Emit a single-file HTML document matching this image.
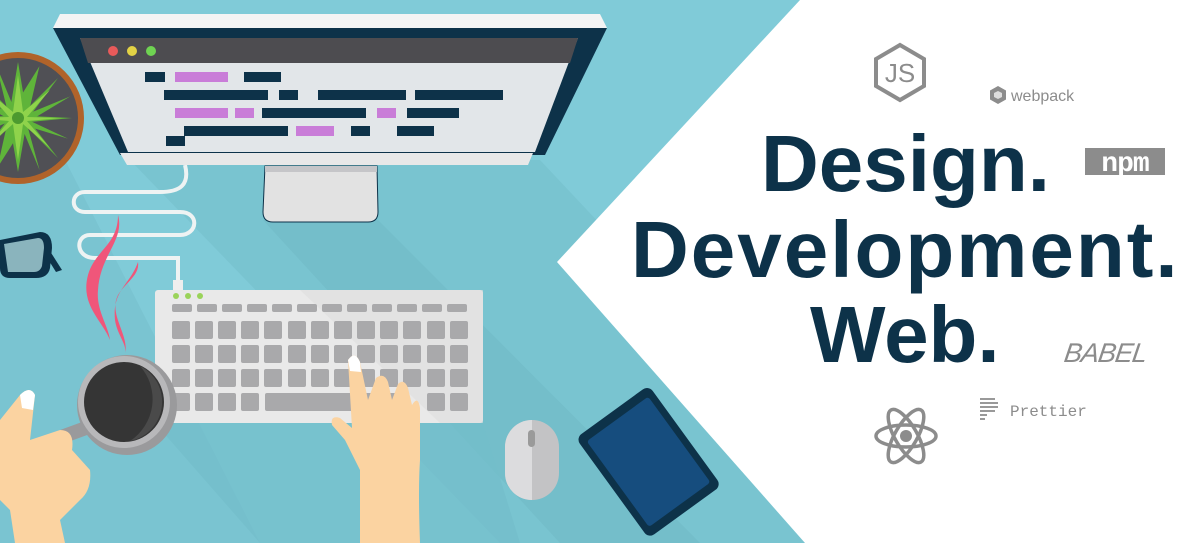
<!DOCTYPE html>
<html><head><meta charset="utf-8"><style>
html,body{margin:0;padding:0;width:1200px;height:543px;overflow:hidden;background:#80cbd8}
.t{position:absolute;font-family:"Liberation Sans",sans-serif;font-weight:bold;color:#0d3249;font-size:80px;line-height:1;white-space:nowrap}
</style></head><body>
<svg width="1200" height="543" style="position:absolute;left:0;top:0" xmlns="http://www.w3.org/2000/svg">
<rect width="1200" height="543" fill="#80cbd8"/>
<polygon points="130,160 540,160 900,543 500,543" fill="#76c0cd" opacity="0.7"/>
<polygon points="263,220 378,220 700,543 560,543" fill="#6fb7c4" opacity="0.5"/>
<polygon points="0,170 60,150 260,543 0,543" fill="#76c0cd" opacity="0.6"/>
<polygon points="155,423 483,423 520,543 260,543" fill="#74bdca" opacity="0.7"/>
<polygon points="800,0 1200,0 1200,543 805,543 557,262" fill="#fff"/>
<!-- plant -->
<circle cx="18" cy="118" r="66" fill="#b0632a"/>
<circle cx="18" cy="118" r="60" fill="#505055"/>
<g fill="#5fb43a">
<polygon points="18,62 26,110 58,78 30,116 72,118 30,122 58,158 26,126 18,172 10,126 -22,158 6,122 -36,118 6,116 -22,78 10,110"/>
<polygon points="18,62 26,110 58,78 30,116 72,118 30,122 58,158 26,126 18,172 10,126 -22,158 6,122 -36,118 6,116 -22,78 10,110" transform="rotate(22.5 18 118)"/>
</g>
<g fill="#8fd34b"><polygon points="18,75 23,112 50,90 27,117 62,118 27,121 50,148 23,124 18,160 13,124 -14,148 9,121 -26,118 9,117 -14,90 13,112"/></g>
<circle cx="18" cy="118" r="6" fill="#4c9a2f"/>
<!-- cable -->
<path d="M185,165 C190,185 180,192 160,192 L85,192 C70,192 70,212 85,212 L180,212 C200,212 198,235 180,235 L90,235 C75,235 75,258 95,258 L178,258 L178,290" fill="none" stroke="#eef3f3" stroke-width="4"/>
<rect x="173" y="280" width="10" height="12" fill="#eee"/>
<!-- monitor -->
<polygon points="60,14 600,14 607,28 53,28" fill="#f4f4f4"/>
<polygon points="53,28 607,28 545,155 120,155" fill="#0d3249"/>
<polygon points="80,38 578,38 535,152 128,152" fill="#e2e6e9"/>
<polygon points="80,38 578,38 570,63 88,63" fill="#4d4c50"/>
<circle cx="113" cy="51" r="5" fill="#e85a5a"/><circle cx="132" cy="51" r="5" fill="#e2d245"/><circle cx="151" cy="51" r="5" fill="#6fd352"/>
<g fill="#0d3249">
<rect x="145" y="72" width="20" height="10"/><rect x="244" y="72" width="37" height="10"/>
<rect x="164" y="90" width="104" height="10"/><rect x="279" y="90" width="19" height="10"/><rect x="318" y="90" width="88" height="10"/><rect x="415" y="90" width="88" height="10"/>
<rect x="262" y="108" width="104" height="10"/><rect x="407" y="108" width="52" height="10"/>
<rect x="184" y="126" width="104" height="10"/><rect x="351" y="126" width="19" height="10"/><rect x="397" y="126" width="37" height="10"/>
<rect x="166" y="136" width="19" height="10"/>
</g>
<g fill="#c97dd8">
<rect x="175" y="72" width="53" height="10"/><rect x="175" y="108" width="53" height="10"/><rect x="235" y="108" width="19" height="10"/><rect x="377" y="108" width="19" height="10"/><rect x="296" y="126" width="38" height="10"/>
</g>
<path d="M120,153 L533,153 L528,165 L127,165 Z" fill="#e8e8e8"/>
<path d="M265,166 L377,166 L378,212 Q378,222 368,222 L273,222 Q263,222 263,212 Z" fill="#e2e2e2" stroke="#0d3249" stroke-width="1"/>
<rect x="265" y="166" width="112" height="6" fill="#c5c5c8"/>
<!-- glasses -->
<g fill="#0d3249"><path d="M0,240 L40,232 Q52,232 52,248 L50,268 Q48,278 36,278 L10,278 Q0,278 0,268Z"/><path d="M48,248 L62,270 L56,272 L46,256Z"/></g>
<path d="M4,244 L38,238 Q44,238 44,248 L42,266 Q40,272 34,272 L8,272 Z" fill="#8ab4bd"/>
<!-- steam -->
<path d="M118,215 C125,240 100,255 98,290 C96,310 108,325 110,340 C102,320 80,305 88,275 C95,250 118,245 118,215Z" fill="#f0567a"/>
<path d="M138,262 C130,285 112,290 115,320 C117,335 128,345 125,355 C130,335 108,315 118,295 C126,282 140,275 138,262Z" fill="#f0567a"/>
<!-- keyboard -->
<rect x="155" y="290" width="328" height="133" rx="3" fill="#e9e9e9"/>
<polygon points="390,290 483,290 483,423 440,423 300,290" fill="#dedede" opacity="0.6"/>
<circle cx="176" cy="296" r="3" fill="#9ad35a"/><circle cx="188" cy="296" r="3" fill="#9ad35a"/><circle cx="200" cy="296" r="3" fill="#9ad35a"/>
<g fill="#a9a9ab">
<rect x="172" y="304" width="20" height="8" rx="2"/><rect x="197" y="304" width="20" height="8" rx="2"/><rect x="222" y="304" width="20" height="8" rx="2"/><rect x="247" y="304" width="20" height="8" rx="2"/><rect x="272" y="304" width="20" height="8" rx="2"/><rect x="297" y="304" width="20" height="8" rx="2"/><rect x="322" y="304" width="20" height="8" rx="2"/><rect x="347" y="304" width="20" height="8" rx="2"/><rect x="372" y="304" width="20" height="8" rx="2"/><rect x="397" y="304" width="20" height="8" rx="2"/><rect x="422" y="304" width="20" height="8" rx="2"/><rect x="447" y="304" width="20" height="8" rx="2"/>
</g>
<g id="row" fill="#a9a9ab">
<rect x="172" y="321" width="18" height="18" rx="2"/><rect x="195" y="321" width="18" height="18" rx="2"/><rect x="218" y="321" width="18" height="18" rx="2"/><rect x="241" y="321" width="18" height="18" rx="2"/><rect x="264" y="321" width="18" height="18" rx="2"/><rect x="288" y="321" width="18" height="18" rx="2"/><rect x="311" y="321" width="18" height="18" rx="2"/><rect x="334" y="321" width="18" height="18" rx="2"/><rect x="357" y="321" width="18" height="18" rx="2"/><rect x="380" y="321" width="18" height="18" rx="2"/><rect x="403" y="321" width="18" height="18" rx="2"/><rect x="427" y="321" width="18" height="18" rx="2"/><rect x="450" y="321" width="18" height="18" rx="2"/>
</g>
<use href="#row" y="24"/><use href="#row" y="48"/>
<g fill="#a9a9ab">
<rect x="172" y="393" width="18" height="18" rx="2"/><rect x="195" y="393" width="18" height="18" rx="2"/><rect x="218" y="393" width="18" height="18" rx="2"/><rect x="241" y="393" width="18" height="18" rx="2"/><rect x="265" y="393" width="135" height="18" rx="2"/><rect x="427" y="393" width="18" height="18" rx="2"/><rect x="450" y="393" width="18" height="18" rx="2"/>
</g>
<!-- mug -->
<rect x="55" y="425" width="40" height="14" rx="6" fill="#9a9a9c" transform="rotate(-20 75 432)"/>
<circle cx="127" cy="405" r="50" fill="#9a9a9c"/>
<circle cx="124" cy="402" r="46" fill="#b8b8ba"/>
<circle cx="124" cy="402" r="40" fill="#353535"/>
<path d="M140,366 A40,40 0 0 1 130,441 A50,50 0 0 0 140,366Z" fill="#4a4a4a"/>
<!-- left hand -->
<path d="M0,420 L20,395 Q30,385 35,395 L30,440 L60,430 Q75,430 72,450 L90,470 Q92,490 80,500 L60,520 L65,543 L15,543 L10,510 L0,500Z" fill="#fbd3a1"/>
<path d="M20,395 Q30,385 35,395 L33,410 L22,408Z" fill="#fff"/>
<!-- right hand -->
<path d="M348,360 Q355,350 360,362 L368,400 L376,378 Q384,372 388,382 L392,400 L398,384 Q404,378 408,388 L412,405 Q418,395 420,408 L420,460 Q418,490 420,543 L360,543 L360,470 L345,440 L332,425 Q330,415 340,418 L352,428Z" fill="#fbd3a1"/>
<path d="M348,360 Q355,350 360,362 L361,372 L350,371Z" fill="#fff"/>
<!-- mouse -->
<rect x="505" y="420" width="54" height="80" rx="27" fill="#c3c3c5"/>
<path d="M532,420 A27,27 0 0 0 505,447 L505,473 A27,27 0 0 0 532,500Z" fill="#dcdcde"/>
<rect x="528" y="430" width="7" height="17" rx="3.5" fill="#9a9a9a"/>
<!-- tablet -->
<g transform="rotate(-36 648 461)"><rect x="603" y="400" width="90" height="124" rx="7" fill="#0d3249"/><rect x="610" y="409" width="76" height="106" rx="3" fill="#164d7e"/></g>
<!-- logos -->
<polygon points="900,45 924,59 924,86 900,100 876,86 876,59" fill="none" stroke="#8c8c8c" stroke-width="4"/>
<text x="900" y="82" font-family="Liberation Sans,sans-serif" font-size="26" fill="#8c8c8c" text-anchor="middle">JS</text>
<g transform="translate(998,95)"><polygon points="0,-9 8,-4.5 8,4.5 0,9 -8,4.5 -8,-4.5" fill="#8c8c8c"/><polygon points="0,-4 4,-2 4,2 0,4 -4,2 -4,-2" fill="#ddd"/></g>
<text x="1011" y="101" font-family="Liberation Sans,sans-serif" font-size="16" fill="#8c8c8c">webpack</text>
<rect x="1085" y="148" width="80" height="27" fill="#8c8c8c"/>
<text x="1125" y="171" font-family="Liberation Mono,monospace" font-weight="bold" font-size="28" fill="#fff" text-anchor="middle" letter-spacing="-1">npm</text>
<text x="1064" y="362" font-family="Liberation Sans,sans-serif" font-style="italic" font-size="27" fill="#8c8c8c" transform="skewX(-8)" dx="50" letter-spacing="-1">BABEL</text>
<g fill="none" stroke="#8c8c8c" stroke-width="3.5" transform="translate(906,436)">
<ellipse rx="30" ry="11"/><ellipse rx="30" ry="11" transform="rotate(60)"/><ellipse rx="30" ry="11" transform="rotate(-60)"/></g>
<circle cx="906" cy="436" r="6" fill="#8c8c8c"/>
<g fill="#999"><rect x="980" y="398" width="15" height="2"/><rect x="980" y="402" width="18" height="2"/><rect x="980" y="406" width="18" height="2"/><rect x="980" y="410" width="15" height="2"/><rect x="980" y="414" width="7" height="2"/><rect x="980" y="418" width="5" height="2"/></g>
<text x="1010" y="416" font-family="Liberation Mono,monospace" font-size="16" fill="#8c8c8c">Prettier</text>
</svg>
<div class="t" style="left:761px;top:124px">Design.</div>
<div class="t" style="left:631px;top:210px;letter-spacing:2px">Development.</div>
<div class="t" style="left:810px;top:295px">Web.</div>
</body></html>
